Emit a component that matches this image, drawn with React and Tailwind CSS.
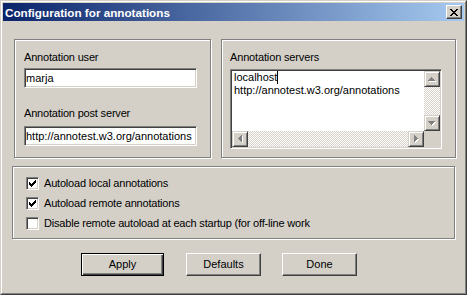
const font = "font-['Liberation_Sans',Arial,sans-serif]";

// pixel-art helpers
const Pixels = ({ w, h, rects, color }) => (
  <svg width={w} height={h} viewBox={`0 0 ${w} ${h}`} shapeRendering="crispEdges">
    {rects.map(([x, y, rw, rh], i) => (
      <rect key={i} x={x} y={y} width={rw} height={rh} fill={color} />
    ))}
  </svg>
);

const arrowRects = (dir) => {
  const r = [];
  for (let i = 0; i < 4; i++) {
    if (dir === "up") r.push([3 - i, i, 2 * i + 1, 1]);
    if (dir === "down") r.push([3 - i, 3 - i, 2 * i + 1, 1]);
    if (dir === "left") r.push([i, 3 - i, 1, 2 * i + 1]);
    if (dir === "right") r.push([3 - i, 3 - i, 1, 2 * i + 1]);
  }
  return r;
};

const Arrow = ({ dir }) => {
  const vertical = dir === "up" || dir === "down";
  const w = vertical ? 8 : 5;
  const h = vertical ? 5 : 8;
  const base = arrowRects(dir);
  return (
    <svg width={w} height={h} viewBox={`0 0 ${w} ${h}`} shapeRendering="crispEdges">
      {base.map(([x, y, rw, rh], i) => (
        <rect key={"s" + i} x={x + 1} y={y + 1} width={rw} height={rh} fill="#fff" />
      ))}
      {base.map(([x, y, rw, rh], i) => (
        <rect key={i} x={x} y={y} width={rw} height={rh} fill="#808080" />
      ))}
    </svg>
  );
};

const ScrollButton = ({ dir }) => (
  <div className="w-[16px] h-[16px] bg-[#d4d0c8] border border-t-[#d4d0c8] border-l-[#d4d0c8] border-r-[#404040] border-b-[#404040] shadow-[inset_1px_1px_0_#fff,inset_-1px_-1px_0_#808080] flex items-center justify-center">
    <Arrow dir={dir} />
  </div>
);

const track = "bg-[repeating-conic-gradient(#fff_0_25%,#d4d0c8_0_50%)] bg-[length:2px_2px]";

const sunken = "border border-t-[#808080] border-l-[#808080] border-r-white border-b-white shadow-[inset_1px_1px_0_#404040,inset_-1px_-1px_0_#d4d0c8]";

const GroupBox = ({ className, children }) => (
  <div className={`border border-[#808080] shadow-[inset_1px_1px_0_#fff,1px_1px_0_#fff] ${className}`}>
    {children}
  </div>
);

const TextField = ({ value }) => (
  <div className={`w-[173px] h-[20px] bg-white ${sunken} pl-[1px] flex items-center pt-[1px] overflow-hidden whitespace-nowrap`}>
    {value}
  </div>
);

const checkTops = [3, 4, 5, 4, 3, 2, 1];

const Checkbox = ({ checked, label }) => (
  <div className="h-[20px] flex items-center">
    <div className={`w-[13px] h-[13px] bg-white ${sunken} flex items-center justify-center`}>
      {checked && (
        <Pixels
          w={9}
          h={9}
          color="#000"
          rects={checkTops.map((t, i) => [i + 1, t, 1, 3])}
        />
      )}
    </div>
    <span className="ml-[5px] tracking-[-0.19px]">{label}</span>
  </div>
);

const Button = ({ children, primary, className = "" }) => (
  <div
    className={`h-[23px] flex items-center justify-center bg-[#d4d0c8] ${
      primary
        ? "w-[83px] border border-black shadow-[inset_1px_1px_0_#fff,inset_-1px_-1px_0_#404040,inset_-2px_-2px_0_#808080]"
        : "w-[75px] border border-t-white border-l-white border-r-[#404040] border-b-[#404040] shadow-[inset_-1px_-1px_0_#808080]"
    } ${className}`}
  >
    {children}
  </div>
);

const xRows = [
  [0, 0], [6, 0], [1, 1], [5, 1], [2, 2], [4, 2], [3, 3],
  [2, 4], [4, 4], [1, 5], [5, 5], [0, 6], [6, 6],
];

export default function App() {
  return (
    <div className={`w-[467px] h-[295px] bg-[#d4d0c8] text-[11px] leading-[13px] text-black ${font} border border-t-[#d4d0c8] border-l-[#d4d0c8] border-r-[#404040] border-b-[#404040]`}>
      <div className="h-full border border-t-white border-l-white border-r-[#808080] border-b-[#808080] p-[1px] flex flex-col">
        {/* title bar */}
        <div className="h-[18px] shrink-0 flex items-center justify-between pl-[2px] pr-[2px] bg-[linear-gradient(to_right,#0a246a,#a6caf0)]">
          <span className="text-white font-bold text-[11.7px]">Configuration for annotations</span>
          <div className="w-[16px] h-[14px] bg-[#d4d0c8] border border-t-white border-l-white border-r-[#404040] border-b-[#404040] shadow-[inset_-1px_-1px_0_#808080] flex items-center justify-center pr-[1px]">
            <Pixels w={8} h={7} color="#000" rects={xRows.map(([x, y]) => [x, y, 2, 1])} />
          </div>
        </div>

        {/* top row */}
        <div className="flex mt-[18px] ml-[11px]">
          <GroupBox className="w-[197px] h-[119px] pl-[9px] pt-[11px]">
            <div className="tracking-[-0.18px]">Annotation user</div>
            <div className="mt-[4px]">
              <TextField value="marja" />
            </div>
            <div className="mt-[19px] tracking-[-0.18px]">Annotation post server</div>
            <div className="mt-[6px]">
              <TextField value="http://annotest.w3.org/annotations" />
            </div>
          </GroupBox>

          <GroupBox className="ml-[10px] w-[235px] h-[119px] pl-[8px] pt-[11px]">
            <div className="tracking-[-0.15px]">Annotation servers</div>
            <div className={`mt-[5px] w-[212px] h-[80px] bg-white ${sunken} p-[1px]`}>
              <div className="w-full h-full grid grid-cols-[1fr_16px] grid-rows-[1fr_16px]">
                <div className="pl-[2px] overflow-hidden whitespace-nowrap">
                  <div className="flex items-center">
                    localhost<span className="inline-block w-px h-[13px] bg-black" />
                  </div>
                  <div>http://annotest.w3.org/annotations</div>
                </div>
                <div className={`flex flex-col ${track}`}>
                  <ScrollButton dir="up" />
                  <div className="flex-1" />
                  <ScrollButton dir="down" />
                </div>
                <div className={`flex ${track}`}>
                  <ScrollButton dir="left" />
                  <div className="flex-1" />
                  <ScrollButton dir="right" />
                </div>
                <div className="bg-[#d4d0c8]" />
              </div>
            </div>
          </GroupBox>
        </div>

        {/* options */}
        <GroupBox className="mt-[8px] ml-[9px] w-[443px] h-[73px] pl-[13px] pt-[6px]">
          <Checkbox checked label="Autoload local annotations" />
          <Checkbox checked label="Autoload remote annotations" />
          <Checkbox label="Disable remote autoload at each startup (for off-line work" />
        </GroupBox>

        {/* buttons */}
        <div className="flex mt-[14px] ml-[78px]">
          <Button primary>Apply</Button>
          <Button className="ml-[22px]">Defaults</Button>
          <Button className="ml-[21px]">Done</Button>
        </div>
      </div>
    </div>
  );
}
